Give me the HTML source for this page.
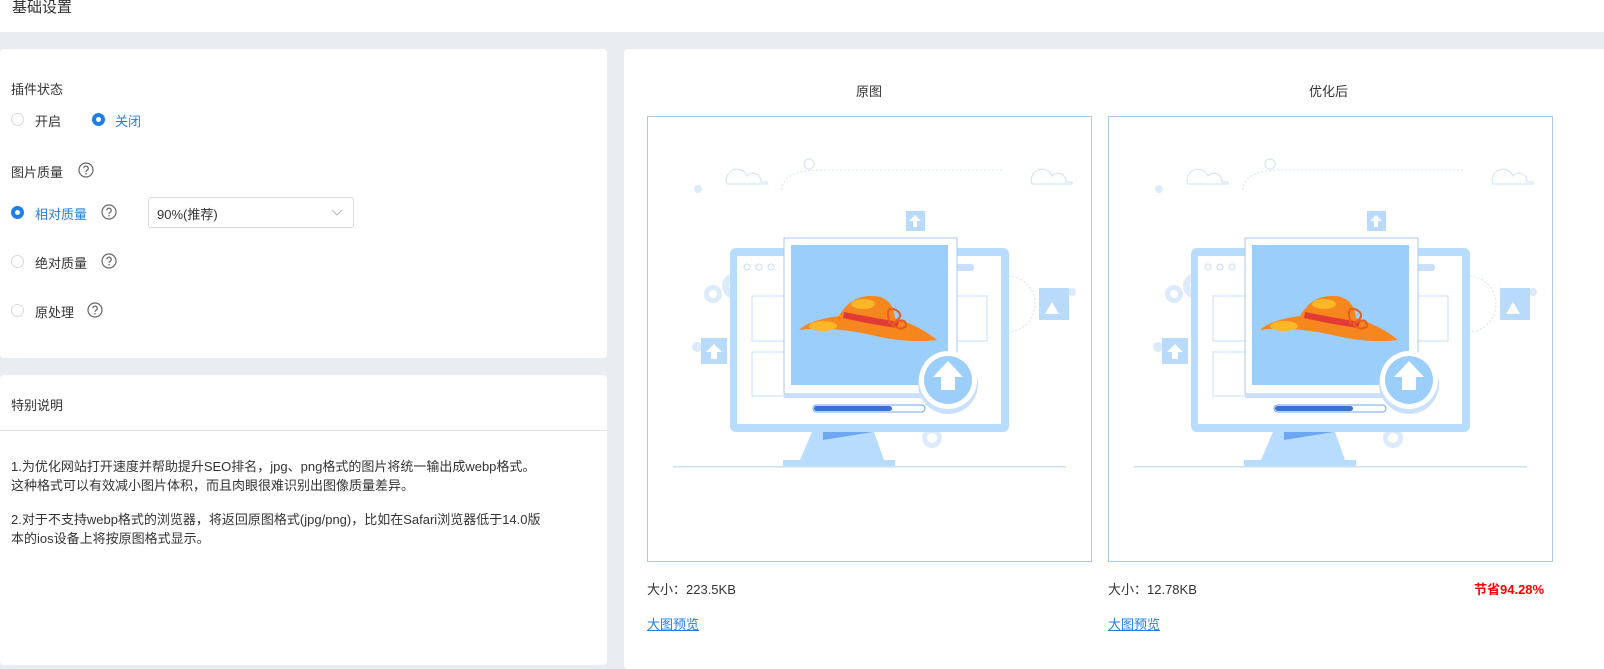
<!DOCTYPE html>
<html><head><meta charset="utf-8">
<style>
*{margin:0;padding:0;box-sizing:border-box}
body{width:1604px;height:656px;overflow:hidden;background:#e9ecf0;font-family:"Liberation Sans","Noto Sans CJK SC",sans-serif;font-size:13px;color:#333;position:relative}
.abs{position:absolute}
.card{position:absolute;background:#fff;border-radius:4px}
.radio{position:absolute;width:13px;height:13px;border-radius:50%;border:1px solid #d9d9d9;background:#fff}
.radio.on{border:4px solid #1f7fe8;background:#fff}
.q{position:absolute;width:16px;height:16px}
.box{position:absolute;border:1px solid #a9c9ee;width:445px;height:446px;top:116px}
a{color:#1f7fe8;text-decoration:underline}
</style></head><body>
<svg width="0" height="0" style="position:absolute"><defs><g id="qi"><circle cx="8" cy="8" r="7" fill="none" stroke="#666" stroke-width="1.2"/><path d="M5.8 6.3a2.2 2.2 0 1 1 3.2 2c-.8.4-1 .8-1 1.6" fill="none" stroke="#666" stroke-width="1.2"/><circle cx="8" cy="11.8" r=".8" fill="#666"/></g></defs></svg>
<div class="abs" style="left:0;top:0;width:1604px;height:32px;background:#fff"></div>
<div class="abs" style="left:12px;top:-4px;font-size:15px;color:#333">基础设置</div>

<div class="card" style="left:0;top:49px;width:607px;height:309px"></div>
<div class="abs" style="left:11px;top:79px">插件状态</div>
<div class="radio" style="left:11px;top:113px"></div>
<div class="abs" style="left:35px;top:111px">开启</div>
<div class="radio on" style="left:92px;top:113px"></div>
<div class="abs" style="left:115px;top:111px;color:#1f7fe8">关闭</div>
<div class="abs" style="left:11px;top:162px">图片质量</div>
<svg class="q" style="left:78px;top:162px"><use href="#qi"/></svg>
<div class="radio on" style="left:11px;top:206px"></div>
<div class="abs" style="left:35px;top:204px;color:#1f7fe8">相对质量</div>
<svg class="q" style="left:101px;top:204px"><use href="#qi"/></svg>
<div class="abs" style="left:148px;top:197px;width:206px;height:31px;border:1px solid #d9d9d9;border-radius:3px;padding:6px 8px">90%(推荐)
<svg class="abs" style="right:10px;top:11px" width="12" height="8"><path d="M1 1L6 6L11 1" fill="none" stroke="#bbb"/></svg></div>
<div class="radio" style="left:11px;top:255px"></div>
<div class="abs" style="left:35px;top:253px">绝对质量</div>
<svg class="q" style="left:101px;top:253px"><use href="#qi"/></svg>
<div class="radio" style="left:11px;top:304px"></div>
<div class="abs" style="left:35px;top:302px">原处理</div>
<svg class="q" style="left:87px;top:302px"><use href="#qi"/></svg>

<div class="card" style="left:0;top:375px;width:607px;height:290px"></div>
<div class="abs" style="left:11px;top:395px">特别说明</div>
<div class="abs" style="left:0;top:430px;width:607px;height:1px;background:#dfe3ea"></div>
<div class="abs" style="left:11px;top:457px;line-height:19px;width:590px">1.为优化网站打开速度并帮助提升SEO排名，jpg、png格式的图片将统一输出成webp格式。<br>这种格式可以有效减小图片体积，而且肉眼很难识别出图像质量差异。</div>
<div class="abs" style="left:11px;top:510px;line-height:19px;width:590px">2.对于不支持webp格式的浏览器，将返回原图格式(jpg/png)，比如在Safari浏览器低于14.0版<br>本的ios设备上将按原图格式显示。</div>

<div class="card" style="left:624px;top:49px;width:990px;height:620px"></div>
<div class="abs" style="left:856px;top:81px">原图</div>
<div class="abs" style="left:1309px;top:81px">优化后</div>

<div class="box" style="left:647px"></div>
<div class="box" style="left:1108px"></div>

<svg class="abs" style="left:647px;top:116px" width="445" height="446" viewBox="0 0 445 446">
<g id="ill">
<g fill="none" stroke="#d6e6f8" stroke-width="1.2">
<path d="M80 68a10 10 0 0 1 20-8a8 8 0 0 1 14 6h6v2H80z"/>
<path d="M185 68a10 10 0 0 1 20-8a8 8 0 0 1 14 6h6v2H185z" transform="translate(200 0)"/>
<path d="M120 160a28 28 0 0 0 0 56h240a28 28 0 0 0 0-56" stroke-dasharray="2 2"/>
<path d="M135 74q0-20 40-20h180" stroke-dasharray="2 2"/>
<circle cx="162" cy="48" r="5"/>
</g>
<g fill="#dcebfb">
<circle cx="66" cy="178" r="9"/><circle cx="66" cy="178" r="4" fill="#fff"/>
<circle cx="88" cy="170" r="13"/><circle cx="88" cy="170" r="6" fill="#fff"/>
<circle cx="51" cy="73" r="4"/><circle cx="50" cy="231" r="5"/><circle cx="425" cy="176" r="4"/>
<circle cx="285" cy="322" r="10"/><circle cx="285" cy="322" r="5" fill="#fff"/>
</g>
<g fill="#b8dafb">
<rect x="259" y="95" width="19" height="20"/><path d="M268 99l6 6h-4v6h-4v-6h-4z" fill="#fff"/>
<rect x="54" y="222" width="26" height="26"/><path d="M67 228l8 8h-5v7h-6v-7h-5z" fill="#fff"/>
<rect x="392" y="172" width="30" height="32"/><path d="M398 198l7-12l7 12z" fill="#fff"/>
</g>
<rect x="83" y="132" width="279" height="184" rx="6" fill="#b7dcfd"/>
<rect x="90" y="140" width="264" height="168" fill="#fff"/>
<g fill="none" stroke="#c5dff8"><circle cx="100" cy="151" r="3"/><circle cx="112" cy="151" r="3"/><circle cx="124" cy="151" r="3"/>
<rect x="105" y="180" width="40" height="45"/><rect x="105" y="236" width="40" height="44"/><rect x="300" y="180" width="40" height="45"/></g>
<rect x="305" y="148" width="22" height="7" rx="3" fill="#c9dffa"/>
<path d="M165 316h62l10 28h-84z" fill="#b7dcfd"/><path d="M176 316h50l-50 8z" fill="#6ea7f1"/>
<rect x="136" y="344" width="112" height="7" fill="#b7dcfd"/>
<rect x="26" y="350" width="393" height="1.5" fill="#c9dffa"/>
<rect x="137" y="122" width="173" height="156" fill="#fff" stroke="#a9c9ee"/>
<rect x="137" y="278" width="173" height="4" fill="#c9dffa"/>
<rect x="144" y="129" width="157" height="140" fill="#9ccefb"/>
<rect x="166" y="289" width="112" height="7" rx="3.5" fill="#fff" stroke="#6ea7f1"/>
<rect x="167" y="290" width="78" height="5" rx="2.5" fill="#3b6fd1"/>
<circle cx="301" cy="268" r="30" fill="#c9dffa"/>
<circle cx="301" cy="264" r="29" fill="#fff"/>
<circle cx="301" cy="264" r="24" fill="#9ccefb"/>
<path d="M301 245l15 16h-8v13h-14v-13h-8z" fill="#fff"/>
<path d="M152 214q10-10 40-14q12-22 36-20q18 2 20 22q25 8 42 22q-30 4-70-6q-40-8-68-4z" fill="#f6861e"/>
<path d="M197 196q30 6 55 10l-2 6q-28-4-54-10z" fill="#e23b35"/>
<ellipse cx="216" cy="188" rx="12" ry="5" fill="#fbb728"/>
<ellipse cx="176" cy="210" rx="14" ry="5" fill="#fbb728"/>
<path d="M243 208q-6-20 6-14q10 6-4 14q14-8 14 2q-6 6-14-2" fill="none" stroke="#e85c20" stroke-width="2"/>
</g>
</svg>
<svg class="abs" style="left:1108px;top:116px" width="445" height="446" viewBox="0 0 445 446"><use href="#ill"/></svg>

<div class="abs" style="left:647px;top:579px">大小：223.5KB</div>
<a class="abs" style="left:647px;top:614px">大图预览</a>
<div class="abs" style="left:1108px;top:579px">大小：12.78KB</div>
<div class="abs" style="left:1474px;top:579px;color:#f00;font-weight:bold">节省94.28%</div>
<a class="abs" style="left:1108px;top:614px">大图预览</a>
</body></html>
